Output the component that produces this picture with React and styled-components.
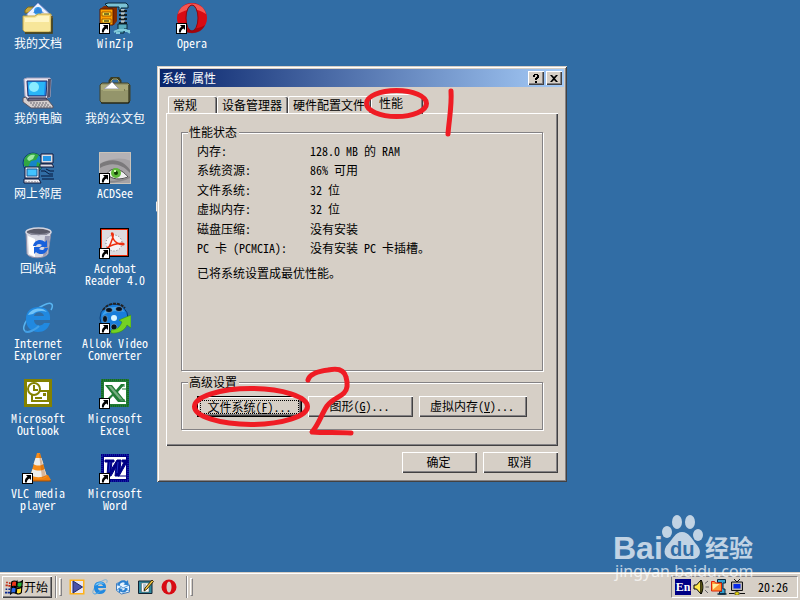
import React from 'react';
import styled, { createGlobalStyle, css } from 'styled-components';

const face = '#d6cfc6';
const shade = '#848284';
const dark = '#424142';

const GlobalStyle = createGlobalStyle`
  * {
    box-sizing: border-box;
  }
  body {
    margin: 0;
    font: 12px/12px "Noto Sans CJK SC", "Liberation Mono", sans-serif;
    font-feature-settings: "hwid";
    color: #000;
    overflow: hidden;
  }
  button {
    font: inherit;
    font-feature-settings: inherit;
    color: inherit;
    border: 0;
    padding: 0;
    background: none;
  }
`;

const raised = css`
  background: ${face};
  box-shadow: inset 1px 1px #fff, inset -1px -1px ${dark},
    inset -2px -2px ${shade};
`;

/* ---------- icons ---------- */

const ShortcutArrow = () => (
  <g>
    <path d="M0 21h11v11H0z" fill="#000" />
    <path d="M1 22h9v9H1z" fill="#fff" />
    <path d="M4 23h5v5L7.500 26.500C5.500 27.500 5 28.500 4.800 30.500H3C2.500 28 3.500 26 5.500 24.800z" fill="#000" />
  </g>
);

const Documents = () => (
  <>
    <path d="M3 8l3-3h6l2 3v3H3z" fill="#c8a83c" stroke="#7b6a20" />
    <path d="M5 12L16 1l15 14-3 3-3-2v9H6z" fill="#eef2ff" stroke="#8f9fd8" />
    <circle cx="16" cy="9" r="4" fill="#39a2ee" />
    <path d="M11 11l5-6 6 6z" fill="#2b6fd0" opacity=".6" />
    <path d="M1 14h12l3-2h13v17l-2 1H3l-2-2z" fill="#f7e69a" stroke="#bfa243" />
    <path d="M3 16h10l3-2h11v6H3z" fill="#fff6c6" />
    <path d="M3 31h27V14" fill="none" stroke="#4a3c08" strokeWidth="1.500" />
  </>
);

const Computer = () => (
  <>
    <path d="M2 2l3-1h23l1 2-1 17-3 1H4l-1-2z" fill="#e8e4ee" stroke="#a5a2bd" />
    <path d="M26 2h3l-1 18-3 1z" fill="#55536b" />
    <path d="M5 4h20l-1 15H6z" fill="#2186e6" stroke="#21316b" />
    <path d="M6 5h17l-1 13H7z" fill="#29b6f7" />
    <ellipse cx="12" cy="10" rx="5" ry="5" fill="#8aebff" />
    <path d="M7 21h17l2 3H5z" fill="#6b6984" stroke="#31304a" />
    <path d="M1 21l3-1 2 4 20-1 5 6v2H9L1 25z" fill="#d6cfce" stroke="#5a5563" />
    <path d="M8 26h17M10 28h17M12 30h17" stroke="#6b6973" strokeDasharray="2 1" />
  </>
);

const Network = () => (
  <>
    <circle cx="11" cy="11" r="10" fill="#1585c8" stroke="#103c70" />
    <path d="M2 8C4 2 11-1 17 3l-3 5-5 1-3 6-4-1z" fill="#31a642" />
    <path d="M5 7c1-3 4-5 8-4l-2 4-4 2z" fill="#9be8a0" />
    <path d="M15 10l5 2-2 6-4-1zM7 14l4 2v5l-5-3z" fill="#31a642" />
    <path d="M19 2h12v9H19zM18 12h12l2 3H18z" fill="#dedfe7" stroke="#10183c" />
    <path d="M21 4h8v5h-8z" fill="#2196e8" />
    <path d="M3 15h14v11H3zM2 27h15l2 4H2z" fill="#efeff4" stroke="#10183c" />
    <path d="M5 17h10v7H5z" fill="#42c3ff" stroke="#1b5c9b" />
    <path d="M19 19h4l4 3h4M19 24h12M20 27h12M24 17l4 2h4" stroke="#06183c" fill="none" />
    <path d="M3 30h13" stroke="#7b7984" strokeDasharray="2 1" />
  </>
);

const RecycleBin = () => (
  <>
    <path d="M4 5l1 22c3 5 17 5 21 0l3-22z" fill="#d8d9e2" stroke="#8c8ca5" />
    <path d="M6 9l1 18 6 3V12z" fill="#fff" />
    <path d="M23 9h5l-3 18-4 3z" fill="#9a9ab0" />
    <ellipse cx="16.500" cy="5" rx="12.500" ry="4" fill="#5a5a68" stroke="#d4d5e0" strokeWidth="1.500" />
    <path d="M6 5c3 2 17 3 21 0l-2 3H9z" fill="#8a8a9a" />
    <path d="M11 19c1-6 8-8 12-4l2-2v7h-7l2-2c-3-2-5-1-6 1zM26 21c-1 6-8 8-12 4l-2 2v-7h7l-2 2c3 2 5 1 6-1z" fill="#1961dc" />
  </>
);

const Explorer = ({ plain }) => (
  <>
    <path d="M3 29C-2 26 8 9 22 3c8-4 10 0 7 5" fill="none" stroke={plain ? '#63a8dc' : '#58b4f0'} strokeWidth="1.500" />
    <path d="M28 18H12c0 6 8 7 10 3h6c-2 6-6 9-12 9C9 30 4 25 4 17S9 5 17 5s12 6 11 13zM12 14h10c-1-5-9-5-10 0z" fill="#2189e0" fillRule="evenodd" />
    <path d="M6 13c3-7 14-9 19-3-5-2-11-1-14 2z" fill="#8cd7ff" opacity=".75" />
    <path d="M3 29c3 3 11-2 14-5" fill="none" stroke="#43a0e6" strokeWidth="2" />
  </>
);

const Outlook = () => (
  <>
    <path d="M2 2h28v28H2z" fill="#848200" />
    <path d="M5 5h22v22H5z" fill="#fff" />
    <path d="M10 14h16v10H10z" fill="#fff" stroke="#848200" strokeWidth="2" />
    <circle cx="12" cy="12" r="6" fill="#fff" stroke="#848200" strokeWidth="2" />
    <path d="M12 8v5h4M13 21h7" fill="none" stroke="#848200" strokeWidth="2" />
    <path d="M21 16h3v3h-3z" fill="#848200" />
  </>
);

const Vlc = () => (
  <>
    <path d="M8 23h18l3 5-2 1H4z" fill="#ee8010" />
    <path d="M4 29h25" stroke="#a44c00" />
    <path d="M15 1h3l7 24c-4 3-13 3-17 0z" fill="#f78c18" />
    <path d="M13.500 6h6l2 6c-3 2-7 2-10 0zM10.500 17c4 2 9 2 12 0l2 6c-5 3-11 3-16 0z" fill="#eeeeea" />
    <path d="M18 2l6 22-4 2-3-24z" fill="#b04c00" opacity=".35" />
  </>
);

const ZipCabinet = () => (
  <>
    <path d="M1 7l4-3h13v15l-3 4H1z" fill="#842c00" />
    <path d="M1 7h13v16H1z" fill="#ffa200" stroke="#5a1800" />
    <path d="M3 10h9v4H3zM3 17h9v4H3z" fill="#ffeb42" stroke="#a45500" />
    <path d="M5 12h5M5 19h5" stroke="#000" />
    <path d="M6 2l3-1h18l2 2v3h-7v2h-2V5H9z" fill="#7bc3d6" stroke="#08283a" />
    <path d="M19 22h9v5h-3v4h-8v-3h2z" fill="#58aabd" stroke="#08283a" />
    <path d="M22 7h4v15h-4z" fill="#8c969c" />
    <path d="M20 9h8M20 13h8M20 17h8M20 21h8" stroke="#101c24" strokeWidth="2" />
    <path d="M22 8h3M22 12h3M22 16h3M22 20h3" stroke="#dff4f8" />
    <path d="M15 30l4-2h8l4 3M17 31h4M26 29h5" stroke="#82cadb" strokeWidth="2" fill="none" />
  </>
);

const Briefcase = () => (
  <>
    <path d="M11 7V4l2-3h6l2 3v3" fill="none" stroke="#3c3d23" strokeWidth="3" />
    <path d="M12 6V4l2-2h4l2 2v2" fill="none" stroke="#a5a66f" />
    <path d="M1 8l2-2h26l2 2v16l-2 2H3l-2-2z" fill="#94956b" stroke="#41432a" />
    <path d="M2 8h27v5H2z" fill="#aaa97a" />
    <path d="M5 12l8-7 7 7z" fill="#fff" stroke="#9b9cad" />
    <path d="M4 12h22v2H4z" fill="#7b7c50" />
    <path d="M4 13h21" stroke="#d6d5a1" />
    <path d="M2 26h28V8" fill="none" stroke="#1c1d0c" />
  </>
);

const AcdSee = () => (
  <>
    <path d="M0 0h32v32H0z" fill="#a5a2a5" />
    <path d="M0 0h32v9C21 4 9 7 0 12z" fill="#b5b2b5" />
    <path d="M1 12C12 5 25 8 31 18v3C22 11 12 10 1 16z" fill="#7b797b" />
    <path d="M8 22c4-7 13-7 21 3-8 3-16 3-21-3z" fill="#eee" stroke="#4a484a" />
    <circle cx="17" cy="21" r="5" fill="#5fb93a" />
    <circle cx="17" cy="21" r="2" fill="#123b06" />
    <path d="M15 18h2v2h-2z" fill="#d9ffb4" />
    <path d="M8 30c8 0 16-1 23-5" stroke="#8a888a" fill="none" strokeWidth="2" />
    <path d="M.5.500h31v31H.5z" fill="none" stroke="#c9c3ba" />
  </>
);

const Acrobat = () => (
  <>
    <path d="M1 1h29v29H1z" fill="#000" />
    <path d="M2.500 2.500h26v26h-26z" fill="#dedbde" stroke="#ee2a08" />
    <circle cx="15" cy="16" r="8" fill="#f5f3f5" stroke="#7b797b" strokeDasharray="1 2" />
    <path d="M13 6c3 0 0 8-4 16-2 3-4 1-1-1 5-4 17-6 17-4s-9 0-11-6c-1-3-2-5-1-5z" fill="none" stroke="#ee3010" strokeWidth="1.500" />
  </>
);

const Allok = () => (
  <>
    <circle cx="15" cy="16" r="14" fill="#187dda" stroke="#093b75" />
    <path d="M4 8C9 1 19-1 26 6" stroke="#222" strokeWidth="2" fill="none" strokeDasharray="3 1" />
    <path d="M3 14c3-9 15-13 23-4-8-2-16-1-23 4z" fill="#65c8ff" opacity=".5" />
    <g fill="#08111c" stroke="#9cc9ec" strokeWidth=".5">
      <ellipse cx="10" cy="8" rx="3.500" ry="2.500" />
      <ellipse cx="20" cy="7" rx="3.500" ry="2.500" />
      <ellipse cx="6" cy="17" rx="2.500" ry="3.500" />
      <circle cx="15" cy="25" r="3" />
    </g>
    <circle cx="15" cy="16" r="3" fill="#d9f4ff" />
    <path d="M12 31c8 1 14-3 16-8l4 3V13l-12 5 3 2c-2 5-5 8-11 8z" fill="#74d223" stroke="#318a07" strokeWidth=".5" />
  </>
);

const Excel = () => (
  <>
    <path d="M2 2h28v28H2z" fill="#217c35" />
    <path d="M3 3h26v26H3z" fill="none" stroke="#0f4e1c" strokeDasharray="1 1" />
    <path d="M5 5h22v22H5z" fill="#fff" />
    <path d="M6 8h7l4 5 5-6h4l-7 8 8 10h-8l-5-6-6 6H5l8-8z" fill="#217c35" />
    <path d="M9 9h3l13 15h-3z" fill="#78ac80" />
    <path d="M21 9h5M23 12h4M21 23h5" stroke="#217c35" />
  </>
);

const Word = () => (
  <>
    <path d="M2 2h28v28H2z" fill="#000084" />
    <path d="M3 3h26v26H3z" fill="none" stroke="#2434c2" strokeDasharray="1 1" />
    <path d="M5 5h22v22H5z" fill="#fff" />
    <path d="M6 8h9v2h-2l-1 8 6-10h4l-1 10 4-8h-2V8h6v2h-1l-8 14h-4l1-9-5 9H8L9 10H6z" fill="#000084" stroke="#000084" />
    <path d="M11 10l-1 10M19 10l-1 11" stroke="#2434c2" />
    <path d="M19 24h8" stroke="#000084" />
  </>
);

const Opera = () => (
  <>
    <ellipse cx="16" cy="16" rx="15" ry="15" fill="#d80b13" />
    <path d="M2 12C5-2 27-2 30 12 20 5 10 7 2 12z" fill="#ff7068" opacity=".75" />
    <path d="M3 23c4 11 22 11 26 0-8 5-18 5-26 0z" fill="#850006" opacity=".6" />
    <ellipse cx="16" cy="16" rx="6" ry="13" fill="#316da5" stroke="#93040a" />
  </>
);

const OperaSmall = () => (
  <>
    <ellipse cx="16" cy="16" rx="15" ry="15" fill="#d80b13" />
    <ellipse cx="16" cy="16" rx="5" ry="11" fill={face} />
  </>
);

const MediaPlayer = () => (
  <>
    <path d="M1 1h30v30H1z" fill="#ffb21a" />
    <path d="M4 4h24v24H4z" fill="#e9e6f2" />
    <path d="M8 4l19 12L8 28z" fill="#4a52a8" stroke="#202765" strokeWidth="2" />
  </>
);

const Mail = () => (
  <>
    <path d="M3 9l17-5 9 8v14l-16 4-10-7z" fill="#e6f3ff" stroke="#447dbc" strokeWidth="2" />
    <path d="M3 9l13 9 13-6M3 23l10-8M29 25L18 17" fill="none" stroke="#5e9bd5" strokeWidth="2" />
    <path d="M4 13C8 2 17 0 23 5l3-3 1 11-10-2 3-3c-5-3-9-1-11 5zM25 18c0 8-8 12-14 7l-3 3-1-10 9 2-3 2c3 2 7 0 7-4z" fill="#297fd0" />
  </>
);

const ShowDesktop = () => (
  <>
    <path d="M1 4h27v25H1z" fill="#318aa0" stroke="#123" strokeWidth="2" />
    <path d="M7 8h15v18H7z" fill="#fff" stroke="#555" />
    <path d="M10 12h6M10 16h5M10 20h8" stroke="#6a87a0" strokeWidth="2" />
    <path d="M28 2l3 3-14 16-5 3 2-6z" fill="#f5c842" stroke="#3a2c08" strokeWidth="2" />
  </>
);

const StartFlag = () => (
  <>
    <path d="M12 7c5-4 8 0 9-1l-1 9c-3 1-5-2-9 1z" fill="#ee3518" stroke="#000" strokeWidth="2" />
    <path d="M22 7c4 2 6 0 9-2l-1 10c-3 2-6 2-9 0z" fill="#28b438" stroke="#000" strokeWidth="2" />
    <path d="M11 18c4-4 7 0 9-1l-1 10c-4-1-6-2-9 1z" fill="#2869ed" stroke="#000" strokeWidth="2" />
    <path d="M21 18c4 2 6 0 9-2l-1 10c-3 3-6 3-9 1z" fill="#ffdf30" stroke="#000" strokeWidth="2" />
    <path d="M2 8h3M7 9h3M1 13h4M6 14h4" stroke="#c02810" strokeWidth="3" />
    <path d="M1 20h3M6 20h4M0 26h4M5 26h4" stroke="#0a2890" strokeWidth="3" />
  </>
);

const Speaker = () => (
  <>
    <path d="M2 12h5l9-10v28L7 20H2z" fill="#ffe94a" stroke="#000" strokeWidth="2" />
    <path d="M16 2c5 7 5 21 0 28z" fill="#aaa420" stroke="#000" strokeWidth="2" />
    <path d="M24 9l6-5M25 16h7M24 22l6 6" stroke="#69676b" strokeWidth="2" />
  </>
);

const ZipTray = () => (
  <>
    <path d="M13 1h16v7h-5v12h4v10H17v-5h4V7H13z" fill="#35a0d0" stroke="#05253a" strokeWidth="2" />
    <path d="M1 5h6l2 3h12v16H1z" fill="#ff9b35" stroke="#e0240a" strokeWidth="2" />
    <path d="M3 10h14L4 21z" fill="#fff0a0" />
    <path d="M13 30h18" stroke="#05253a" strokeWidth="3" />
  </>
);

const NetTray = () => (
  <>
    <path d="M10 0l6 6 6-6" fill="none" stroke="#111" strokeWidth="2" />
    <path d="M5 6h22v17H5z" fill="#b8b4b0" stroke="#111" strokeWidth="2" />
    <path d="M9 10h14v9H9z" fill="#0829e8" />
    <path d="M16 23v6M0 29h11M21 29h11" stroke="#111" strokeWidth="2" />
    <path d="M12 26h8v6h-8z" fill="#ebda12" stroke="#111" />
  </>
);

const Icon = ({ art: Art, size = 32, shortcut }) => (
  <svg width={size} height={size} viewBox="0 0 32 32" aria-hidden="true">
    <Art plain={size < 32} />
    {shortcut && <ShortcutArrow />}
  </svg>
);

/* ---------- data ---------- */

const shortcuts = [
  { text: '我的文档', art: Documents },
  { text: '我的电脑', art: Computer },
  { text: '网上邻居', art: Network },
  { text: '回收站', art: RecycleBin },
  { text: 'Internet Explorer', art: Explorer },
  { text: 'Microsoft Outlook', art: Outlook },
  { text: 'VLC media player', art: Vlc, shortcut: true },
  { text: 'WinZip', art: ZipCabinet, shortcut: true },
  { text: '我的公文包', art: Briefcase },
  { text: 'ACDSee', art: AcdSee, shortcut: true },
  { text: 'Acrobat Reader 4.0', art: Acrobat, shortcut: true },
  { text: 'Allok Video Converter', art: Allok, shortcut: true },
  { text: 'Microsoft Excel', art: Excel, shortcut: true },
  { text: 'Microsoft Word', art: Word, shortcut: true },
  { text: 'Opera', art: Opera, shortcut: true },
];

const tabs = ['常规', '设备管理器', '硬件配置文件', '性能'];

const status = [
  ['内存:', '128.0 MB 的 RAM'],
  ['系统资源:', '86% 可用'],
  ['文件系统:', '32 位'],
  ['虚拟内存:', '32 位'],
  ['磁盘压缩:', '没有安装'],
  ['PC 卡 (PCMCIA):', '没有安装 PC 卡插槽。'],
];

const quickLaunch = [
  { name: 'Media Player', art: MediaPlayer },
  { name: 'Internet Explorer', art: Explorer },
  { name: 'Outlook Express', art: Mail },
  { name: 'Desktop', art: ShowDesktop },
  { name: 'Opera', art: OperaSmall },
];

/* ---------- page ---------- */

const App = () => (
  <Screen>
    <GlobalStyle />
    <Desktop>
      <Shortcuts>
        {shortcuts.map(item => (
          <Shortcut key={item.text} type="button">
            <Icon art={item.art} shortcut={item.shortcut} />
            <span>{item.text}</span>
          </Shortcut>
        ))}
      </Shortcuts>

      <Dialog role="dialog" aria-labelledby="dialog-title">
        <TitleBar>
          <Title id="dialog-title">系统 属性</Title>
          <TitleButton type="button" aria-label="Help">
            <svg width="8" height="9" viewBox="0 0 8 9">
              <path d="M1 3V1h1V0h4v1h1v3H6v1H5v1H3V4h1V3h1V1H3v2zM3 7h2v2H3z" />
            </svg>
          </TitleButton>
          <TitleButton type="button" aria-label="Close">
            <svg width="8" height="7" viewBox="0 0 8 7">
              <path d="M0 0h2l2 2 2-2h2L5 3.500 8 7H6L4 5 2 7H0l3-3.500z" />
            </svg>
          </TitleButton>
        </TitleBar>
        <DialogBody>
          <TabList role="tablist">
            {tabs.map((tab, i) => (
              <Tab key={tab} type="button" role="tab" aria-selected={i === 3} $active={i === 3} $first={i === 0}>
                {tab}
              </Tab>
            ))}
          </TabList>
          <Panel role="tabpanel">
            <Group $tall>
              <legend>性能状态</legend>
              <StatusList>
                {status.map(([label, value]) => (
                  <StatusRow key={label}>
                    <dt>{label}</dt>
                    <dd>{value}</dd>
                  </StatusRow>
                ))}
              </StatusList>
              <Note>已将系统设置成最优性能。</Note>
            </Group>
            <Group>
              <legend>高级设置</legend>
              <ButtonRow>
                <Button type="button" $width={105} $focused>
                  <span>文件系统(<u>F</u>)...</span>
                </Button>
                <Button type="button" $width={105}>
                  <span>图形(<u>G</u>)...</span>
                </Button>
                <Button type="button" $width={108}>
                  <span>虚拟内存(<u>V</u>)...</span>
                </Button>
              </ButtonRow>
            </Group>
          </Panel>
          <Footer>
            <Button type="button" $width={75}>确定</Button>
            <Button type="button" $width={75}>取消</Button>
          </Footer>
        </DialogBody>
      </Dialog>

      <Marks width="300" height="370" viewBox="156 80 300 370" aria-hidden="true">
        <path d="M156.500 202v9" stroke="#f0ede8" strokeWidth="1" />
        <ellipse cx="396.500" cy="103.500" rx="30" ry="13" />
        <path d="M451 91c1 15-2 29-3 43" />
        <ellipse cx="251" cy="406.500" rx="56.500" ry="18" />
        <path d="M308 380c2-7 12-9 20-10 9-2 16-1 18 7 2 7 1 13-2 16-5 5-12 6-17 13-6 9-8 18-15 26 13 1 26 0 39 1" />
      </Marks>
    </Desktop>

    <Taskbar>
      <StartButton type="button">
        <Icon art={StartFlag} size={18} />
        开始
      </StartButton>
      <Divider />
      <Grip />
      <QuickLaunch>
        {quickLaunch.map(item => (
          <button key={item.name} type="button" aria-label={item.name}>
            <Icon art={item.art} size={16} />
          </button>
        ))}
      </QuickLaunch>
      <Divider />
      <Grip />
      <Tray>
        <Language>En</Language>
        <Icon art={Speaker} size={16} />
        <Icon art={ZipTray} size={16} />
        <Icon art={NetTray} size={16} />
        <Clock>20:26</Clock>
      </Tray>
    </Taskbar>

    <Watermark width="150" height="72" viewBox="0 0 150 72">
      <text x="0" y="44" className="bai">Bai</text>
      <ellipse cx="54" cy="17" rx="5" ry="6" />
      <ellipse cx="64" cy="7" rx="5" ry="7" />
      <ellipse cx="77" cy="7" rx="5" ry="7" />
      <ellipse cx="85" cy="20" rx="5" ry="6" />
      <path d="M69 17c7 0 10 7 14 12 7 7 4 15-4 15H60c-9 0-11-9-5-15 5-5 7-12 14-12z" />
      <text x="57" y="41" className="du">du</text>
      <text x="92" y="42" className="jingyan">经验</text>
      <text x="2" y="62" className="url">jingyan.baidu.com</text>
    </Watermark>
  </Screen>
);

const Screen = styled.div`
  position: relative;
  display: flex;
  flex-direction: column;
  height: 100vh;
  background: #316da5;
`;

const Desktop = styled.main`
  position: relative;
  flex: 1;
  min-height: 0;
`;

const Shortcuts = styled.div`
  display: grid;
  grid-auto-flow: column;
  grid-template-rows: repeat(7, 75px);
  grid-auto-columns: 76px;
  column-gap: 1px;
  padding-top: 2px;
`;

const Shortcut = styled.button`
  display: flex;
  flex-direction: column;
  align-items: center;
  justify-content: flex-start;
  gap: 3px;
  color: #fff;
  text-align: center;
`;

const Dialog = styled.section`
  position: absolute;
  left: 157px;
  top: 66px;
  isolation: isolate;
  width: 410px;
  padding: 3px;
  background: ${face};
  box-shadow: inset 1px 1px ${face}, inset -1px -1px ${dark},
    inset 2px 2px #fff, inset -2px -2px ${shade};
`;

const TitleBar = styled.header`
  display: flex;
  align-items: center;
  gap: 2px;
  height: 18px;
  padding: 0 2px;
  color: #fff;
  background: linear-gradient(to right, #08246b, #a5cbf7);
`;

const Title = styled.h1`
  flex: 1;
  margin: 0;
  font-size: 12px;
  font-weight: 400;
`;

const TitleButton = styled.button`
  ${raised}
  display: flex;
  align-items: center;
  justify-content: center;
  width: 16px;
  height: 14px;
`;

const DialogBody = styled.div`
  padding: 7px 6px 6px;
`;

const TabList = styled.div`
  display: flex;
  align-items: flex-end;
  height: 20px;
  margin-bottom: -1px;
  padding: 0 2px;
`;

const Tab = styled.button`
  height: 17px;
  margin-bottom: 1px;
  padding: 0 6px 1px 4px;
  border-top: 1px solid #fff;
  border-left: 1px solid #fff;
  border-radius: 2px 2px 0 0;
  background: ${face};
  box-shadow: inset -1px 0 ${dark}, inset -2px 0 ${shade};
  ${props =>
    props.$first &&
    css`
      padding-right: 20px;
    `}
  ${props =>
    props.$active &&
    css`
      position: relative;
      z-index: 1;
      height: 20px;
      margin-bottom: 0;
      padding: 0 20px 3px 7px;
    `}
`;

const Panel = styled.div`
  display: flex;
  flex-direction: column;
  gap: 5px;
  padding: 13px 15px 16px;
  ${raised}
`;

const Group = styled.fieldset`
  min-width: 0;
  min-height: ${props => (props.$tall ? '245px' : 0)};
  margin: 0;
  padding: ${props => (props.$tall ? '3px 15px' : '8px 15px 12px')};
  border: 1px solid ${shade};
  box-shadow: 1px 1px #fff, inset 1px 1px #fff;

  legend {
    margin-left: -9px;
    padding: 0 2px 0 1px;
    background: ${face};
  }
`;

const StatusList = styled.dl`
  display: grid;
  grid-template-rows: repeat(6, 1fr);
  height: 117px;
  margin: 0;
`;

const StatusRow = styled.div`
  display: grid;
  grid-template-columns: 113px 1fr;
  align-items: center;

  dd {
    margin: 0;
  }
`;

const Note = styled.p`
  margin: 9px 0 0;
`;

const ButtonRow = styled.div`
  display: flex;
  gap: 6px;
`;

const Button = styled.button`
  ${raised}
  width: ${props => props.$width}px;
  height: 21px;
  padding: 0 2px 2px 0;
  white-space: nowrap;
  ${props =>
    props.$focused &&
    css`
      padding: 3px;
      box-shadow: inset 0 0 0 1px #000, inset 2px 2px #fff,
        inset -2px -2px ${dark}, inset -3px -3px ${shade};

      span {
        display: block;
        border: 1px dotted #000;
      }
    `}
`;

const Footer = styled.footer`
  display: flex;
  justify-content: flex-end;
  gap: 6px;
  padding-top: 6px;
`;

const Marks = styled.svg`
  position: absolute;
  left: 156px;
  top: 80px;
  fill: none;
  stroke: #ef1c24;
  stroke-width: 5;
  stroke-linecap: round;
  stroke-linejoin: round;
  pointer-events: none;
`;

const Taskbar = styled.footer`
  display: flex;
  align-items: center;
  height: 28px;
  padding: 2px 2px 0;
  background: ${face};
  box-shadow: inset 0 1px ${face}, inset 0 2px #fff;
`;

const StartButton = styled.button`
  ${raised}
  display: flex;
  align-items: center;
  gap: 1px;
  width: 50px;
  height: 22px;
  padding-left: 3px;
  white-space: nowrap;
`;

const Divider = styled.span`
  width: 2px;
  height: 22px;
  margin-left: 3px;
  background: linear-gradient(to right, ${shade} 50%, #fff 50%);
`;

const Grip = styled.span`
  width: 3px;
  height: 18px;
  margin-left: 2px;
  border: 1px solid #fff;
  border-right-color: ${shade};
  border-bottom-color: ${shade};
`;

const QuickLaunch = styled.nav`
  display: flex;
  gap: 7px;
  padding: 0 6px 0 7px;

  button,
  svg {
    display: block;
  }
`;

const Tray = styled.div`
  display: flex;
  align-items: center;
  gap: 2px;
  height: 22px;
  margin-left: auto;
  padding: 0 9px 0 3px;
  border: 1px solid #fff;
  border-top-color: ${shade};
  border-left-color: ${shade};
`;

const Language = styled.span`
  width: 16px;
  height: 16px;
  color: #fff;
  background: #000084;
  font: bold 12px/16px "Liberation Serif", serif;
  text-align: center;
`;

const Clock = styled.time`
  padding-left: 11px;
`;

const Watermark = styled.svg`
  position: absolute;
  right: 37px;
  bottom: 13px;
  fill: #fff;
  opacity: 0.7;
  pointer-events: none;

  .bai {
    font: bold 32px "Liberation Sans", sans-serif;
  }
  .du {
    fill: #316da5;
    font: bold 20px "Liberation Sans", sans-serif;
  }
  .jingyan {
    font: bold 24px "Noto Sans CJK SC", sans-serif;
  }
  .url {
    font: 16px "Noto Sans", sans-serif;
  }
`;

export default App;
